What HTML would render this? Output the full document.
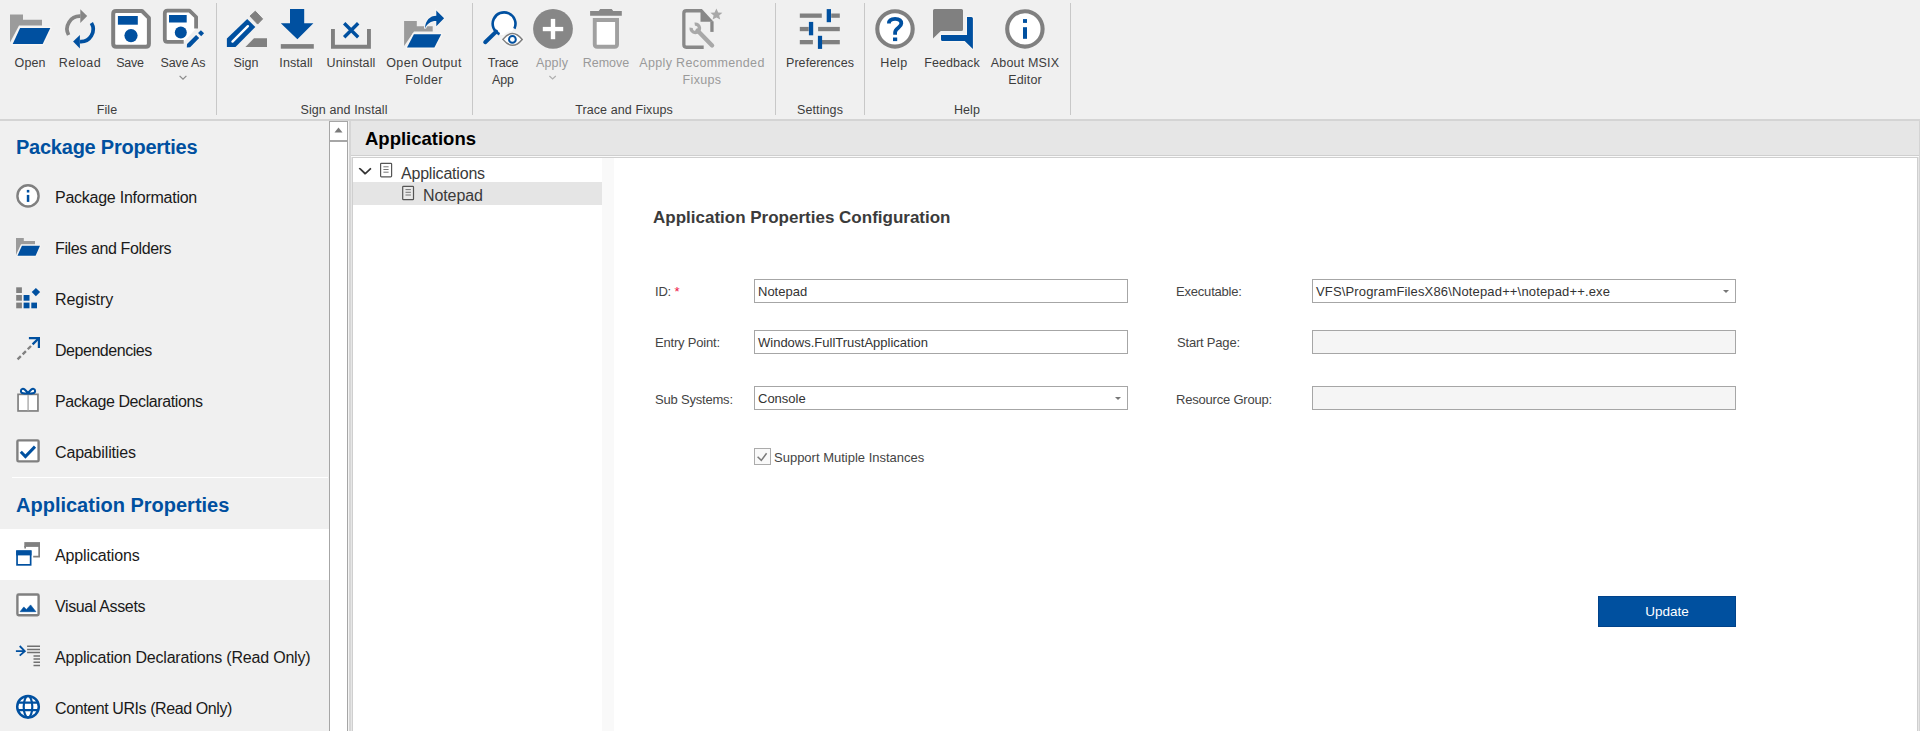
<!DOCTYPE html>
<html><head><meta charset="utf-8">
<style>
*{margin:0;padding:0;box-sizing:border-box}
html,body{width:1920px;height:731px;overflow:hidden;background:#f0f0f0;font-family:"Liberation Sans",sans-serif;color:#000}
.a{position:absolute}
#ribbon{position:absolute;left:0;top:0;width:1920px;height:119px;background:#f0f0f0}
#ribbon .ln{position:absolute;top:119px;left:0;width:1920px;height:2px;background:#d4d4d4}
.sep{position:absolute;top:3px;width:1px;height:112px;background:#c8c8c8}
.lbl{position:absolute;font-size:12.5px;letter-spacing:0.35px;color:#3c3c3c;text-align:center;white-space:nowrap;line-height:17px;transform:translateX(-50%);margin-top:1px}
.dis{color:#9a9a9a}
.glbl{position:absolute;top:102px;font-size:12.5px;letter-spacing:0.1px;color:#3c3c3c;white-space:nowrap;line-height:17px;transform:translateX(-50%)}
.ico{position:absolute}
#nav{position:absolute;left:0;top:121px;width:329px;height:610px;background:#f0f0f0}
.nh{position:absolute;left:16px;font-size:20px;font-weight:bold;letter-spacing:-0.24px;color:#0050a0;white-space:nowrap;margin-top:1px}
.ni{position:absolute;left:55px;font-size:16px;letter-spacing:-0.25px;color:#1a1a1a;white-space:nowrap;margin-top:1px}
#main{position:absolute;left:350px;top:121px;width:1570px;height:610px;background:#e6e6e6}
.fl{position:absolute;font-size:13px;letter-spacing:-0.2px;color:#444;white-space:nowrap}
.tb{position:absolute;height:24px;border:1px solid #a6a6a6;background:#fff;font-size:13px;color:#333;padding-left:3px;line-height:24px;white-space:nowrap}
</style></head><body>
<div id="ribbon">
<svg class="a" style="left:0;top:0" width="1100" height="90">
<!-- Open -->
<path d="M10 14.5H23V19.8H42V25.5H19L10 42.5Z" fill="#9b9b9b"/>
<path d="M20.1 27.9H50.3L42.7 43.9H12.7Z" fill="#0050a0" stroke="#f8f6f4" stroke-width="3" stroke-linejoin="round" paint-order="stroke"/>
<!-- Reload -->
<path d="M68.6 35A12.8 12.8 0 0 1 80.5 16.2" fill="none" stroke="#858585" stroke-width="3.7"/>
<path d="M80.3 9.3L87.2 16.1L80.3 22.9Z" fill="#858585"/>
<path d="M91.4 23A12.3 12.3 0 0 1 80 41.6" fill="none" stroke="#0050a0" stroke-width="3.7"/>
<path d="M79.9 34.9L73.1 41.6L79.9 48.4Z" fill="#0050a0"/>
<!-- Save -->
<path d="M116 11H142L148.9 17.9V43.7Q148.9 46.7 145.9 46.7H116.2Q113.2 46.7 113.2 43.7V14Q113.2 11 116 11Z" fill="#fff" stroke="#808080" stroke-width="4" stroke-linejoin="round"/>
<rect x="117.9" y="16" width="19.9" height="8.7" fill="#0050a0"/>
<circle cx="131" cy="35.6" r="6.6" fill="#0050a0"/>
<!-- Save As -->
<path d="M183.7 41.9H167.5Q164.8 41.9 164.8 39.2V13.5Q164.8 10.7 167.5 10.7H189.5L196.1 17V28.5" fill="#fff" stroke="#808080" stroke-width="3.8" stroke-linejoin="round"/>
<rect x="169" y="15" width="17.7" height="7.5" fill="#0050a0"/>
<circle cx="180.8" cy="32.4" r="6" fill="#0050a0"/>
<path d="M186.8 47.4L187.04 44.04L196.1 35L199.2 38.1L190.16 47.16Z" fill="#0050a0" stroke="#f4f4f4" stroke-width="2.2" stroke-linejoin="round" paint-order="stroke"/>
<path d="M199.6 34.6L202.5 31.7" stroke="#0050a0" stroke-width="4.4"/>
<path d="M179.6 75.8L183 79.2L186.4 75.8" fill="none" stroke="#8a8a8a" stroke-width="1.2"/>
<!-- Sign -->
<path d="M226.9 46.9V38.6L247.2 18.9L255.3 26.9L235.5 46.9Z" fill="#0050a0"/>
<path d="M232.5 41.6L247.9 26.2" stroke="#fff" stroke-width="2.4" stroke-linecap="round"/>
<path d="M255.3 11.2L262.6 18.9L257.6 24.1L250 16.1Z" fill="#808080" stroke="#808080" stroke-width="1" stroke-linejoin="round"/>
<path d="M245.4 46.9L254 38.3H267V46.9Z" fill="#808080"/>
<!-- Install -->
<path d="M290 9H304.2V23.2H313.4L297.4 39.2L280.8 23.2H290Z" fill="#0050a0"/>
<rect x="280.8" y="44.1" width="33" height="4.6" fill="#808080"/>
<!-- Uninstall -->
<path d="M332.95 29.1V46.8H368.95V29.1" fill="none" stroke="#808080" stroke-width="3.9"/>
<path d="M344.2 23.2L358.2 37.2M358.2 23.2L344.2 37.2" stroke="#0050a0" stroke-width="3.4"/>
<!-- Open Output Folder -->
<path d="M404.1 21H416.8V26.2H432.7V31.4H414L404.1 46Z" fill="#9b9b9b"/>
<path d="M413.9 34.3H441.2L434.4 47.6H407Z" fill="#0050a0" stroke="#f8f6f4" stroke-width="3" stroke-linejoin="round" paint-order="stroke"/>
<path d="M425 28.5C425.3 20.5 430 15.8 436.3 15.8V10.5L444.1 18.3L436.3 26.2V21C431.5 20.8 427 23.5 425 28.5Z" fill="#0050a0" stroke="#f4f4f4" stroke-width="2" paint-order="stroke"/>
<!-- Trace App -->
<circle cx="503.6" cy="23.6" r="11.4" fill="#fff"/>
<path d="M514.4 28.6A11.4 11.4 0 1 0 499.5 34.2" fill="none" stroke="#0050a0" stroke-width="2.6"/>
<path d="M485.2 42.2L496.2 31.6" stroke="#0050a0" stroke-width="4" stroke-linecap="round"/>
<path d="M502.2 39.4Q512.5 27 522.9 39.4Q512.5 51.8 502.2 39.4Z" fill="#fff" stroke="#f4f4f4" stroke-width="4.5"/>
<path d="M502.9 39.4Q512.5 27.6 522.2 39.4Q512.5 51.2 502.9 39.4Z" fill="#fff" stroke="#808080" stroke-width="1.5"/>
<circle cx="512.4" cy="39.4" r="3.4" fill="none" stroke="#0050a0" stroke-width="2"/>
<!-- Apply disabled -->
<circle cx="553" cy="28.8" r="19.9" fill="#878787"/>
<rect x="542.8" y="26.9" width="20.4" height="4.3" fill="#fff"/>
<rect x="550.8" y="18.9" width="4.4" height="20.3" fill="#fff"/>
<path d="M549.4 76L552.6 79L555.8 76" fill="none" stroke="#b0b0b0" stroke-width="1.2"/>
<!-- Remove disabled -->
<path d="M590.1 11.1H598.7L600.2 8.9H611.7L613.2 11.1H621.8V15.7H590.1Z" fill="#878787"/>
<path d="M594.75 20.05H617.05V44.3Q617.05 46.8 614.55 46.8H597.25Q594.75 46.8 594.75 44.3Z" fill="#fff" stroke="#a0a0a0" stroke-width="3.9"/>
<!-- Apply Recommended Fixups -->
<path d="M703.7 47.25H686.3Q683.85 47.25 683.85 44.8V13.2Q683.85 10.75 686.3 10.75H701.9" fill="none" stroke="#888" stroke-width="3.3"/>
<path d="M701.9 9.1L713.6 21.7H700.5V9.1Z" fill="#888"/>
<rect x="710.3" y="21.5" width="3.3" height="10.4" fill="#888"/>
<path d="M697.5 30.5L712.1 45.4" stroke="#a8a8a8" stroke-width="4.3" stroke-linecap="round"/>
<path d="M694.7 24.14A4.2 4.2 0 1 1 691.14 27.7" fill="none" stroke="#a8a8a8" stroke-width="3.4"/>
<path d="M716.4 8.5L718.2 12.4L722.4 12.7L719.2 15.5L720.2 19.6L716.4 17.4L712.6 19.6L713.6 15.5L710.4 12.7L714.6 12.4Z" fill="#a8a8a8"/>
<!-- Preferences -->
<g fill="#808080">
<rect x="799.8" y="13.5" width="22" height="4.3"/><rect x="831.2" y="13.5" width="8.6" height="4.3"/>
<rect x="799.8" y="26.9" width="8.9" height="4.3"/><rect x="818.1" y="26.9" width="21.7" height="4.3"/>
<rect x="799.8" y="40" width="13.1" height="4.3"/><rect x="821.8" y="40" width="18" height="4.3"/>
</g>
<g fill="#0050a0">
<rect x="826.7" y="9.1" width="4.3" height="13.1"/>
<rect x="808.9" y="21.9" width="4.3" height="13.4"/>
<rect x="817.9" y="35.8" width="4.2" height="13.1"/>
</g>
<!-- Help -->
<circle cx="895" cy="28.9" r="17.7" fill="#fff" stroke="#808080" stroke-width="4.1"/>
<path d="M888.9 23.6C888.9 19.8 891.5 18.9 895.1 18.9C898.8 18.9 901.3 20.5 901.3 23.6C901.3 27.5 895.1 28 895.1 32.5V34.8" fill="none" stroke="#0050a0" stroke-width="3.8"/>
<rect x="893" y="37.5" width="4.2" height="3.6" fill="#0050a0"/>
<!-- Feedback -->
<path d="M934.5 9.1H961.5Q963 9.1 963 10.6V29.4Q963 30.9 961.5 30.9H940.8L933 38.6V10.6Q933 9.1 934.5 9.1Z" fill="#808080"/>
<path d="M967 16.9H971.4Q972.9 16.9 972.9 18.4V48.9L964.7 41H942.5Q941 41 941 39.5V35H967Z" fill="#0050a0" stroke="#f8f6f4" stroke-width="2.4" stroke-linejoin="round" paint-order="stroke"/>
<!-- About -->
<circle cx="1024.9" cy="28.9" r="17.7" fill="#fff" stroke="#808080" stroke-width="4.1"/>
<rect x="1023" y="19.1" width="4" height="3.8" fill="#0050a0"/>
<rect x="1023" y="27.2" width="4" height="11.6" fill="#0050a0"/>
</svg>
  <div class="ln"></div>
  <div class="sep" style="left:216px"></div>
  <div class="sep" style="left:472px"></div>
  <div class="sep" style="left:775px"></div>
  <div class="sep" style="left:864px"></div>
  <div class="sep" style="left:1070px"></div>

  <div class="lbl" style="left:30px;top:54px;letter-spacing:0.05px">Open</div>
  <div class="lbl" style="left:80px;top:54px;letter-spacing:0.45px">Reload</div>
  <div class="lbl" style="left:130px;top:54px;letter-spacing:-0.25px">Save</div>
  <div class="lbl" style="left:183px;top:54px;letter-spacing:-0.15px">Save As</div>
  <div class="lbl" style="left:246px;top:54px;letter-spacing:0.05px">Sign</div>
  <div class="lbl" style="left:296px;top:54px;letter-spacing:0.10px">Install</div>
  <div class="lbl" style="left:351px;top:54px;letter-spacing:0.10px">Uninstall</div>
  <div class="lbl" style="left:424px;top:54px">Open Output<br>Folder</div>
  <div class="lbl" style="left:503px;top:54px;letter-spacing:-0.15px">Trace<br>App</div>
  <div class="lbl dis" style="left:552px;top:54px;letter-spacing:0.18px">Apply</div>
  <div class="lbl dis" style="left:606px;top:54px;letter-spacing:0.01px">Remove</div>
  <div class="lbl dis" style="left:702px;top:54px">Apply Recommended<br>Fixups</div>
  <div class="lbl" style="left:820px;top:54px;letter-spacing:0.05px">Preferences</div>
  <div class="lbl" style="left:894px;top:54px;letter-spacing:0.40px">Help</div>
  <div class="lbl" style="left:952px;top:54px;letter-spacing:0.08px">Feedback</div>
  <div class="lbl" style="left:1025px;top:54px;letter-spacing:0.17px">About MSIX<br>Editor</div>

  <div class="glbl" style="left:107px">File</div>
  <div class="glbl" style="left:344px">Sign and Install</div>
  <div class="glbl" style="left:624px">Trace and Fixups</div>
  <div class="glbl" style="left:820px">Settings</div>
  <div class="glbl" style="left:967px">Help</div>
</div>

<div id="nav">
  <div class="nh" style="top:14px">Package Properties</div>
  <div class="ni" style="top:67px">Package Information</div>
  <div class="ni" style="top:118px;letter-spacing:-0.381px">Files and Folders</div>
  <div class="ni" style="top:169px;letter-spacing:-0.064px">Registry</div>
  <div class="ni" style="top:220px;letter-spacing:-0.459px">Dependencies</div>
  <div class="ni" style="top:271px;letter-spacing:-0.408px">Package Declarations</div>
  <div class="ni" style="top:322px;letter-spacing:-0.159px">Capabilities</div>
  <div class="nh" style="top:372px;letter-spacing:0">Application Properties</div>
  <div class="a" style="left:0;top:408px;width:329px;height:51px;background:#fff"></div>
  <div class="a" style="left:12px;top:356px;width:316px;height:1px;background:#fff"></div>
  <div class="ni" style="top:425px;letter-spacing:-0.132px">Applications</div>
  <div class="ni" style="top:476px;letter-spacing:-0.367px">Visual Assets</div>
  <div class="ni" style="top:527px;letter-spacing:-0.193px">Application Declarations (Read Only)</div>
  <div class="ni" style="top:578px;letter-spacing:-0.407px">Content URIs (Read Only)</div>
</div>

<div id="sb" class="a" style="left:329px;top:121px;width:19px;height:610px;background:#fff;border:1px solid #a6a6a6;border-bottom:none"></div>
<div class="a" style="left:330px;top:140px;width:17px;height:2px;background:#a6a6a6"></div>
<svg class="a" style="left:334px;top:127px" width="9" height="6"><path d="M0.5 5.5 L4.5 0.5 L8.5 5.5Z" fill="#7a7a7a"/></svg>
<div class="a" style="left:348px;top:121px;width:1px;height:610px;background:#f4f4f4"></div>
<div class="a" style="left:349px;top:121px;width:2px;height:610px;background:#d6d6d6"></div>
<div id="main" class="a" style="left:351px;top:121px;width:1569px;height:610px;background:#e6e6e6">
  <div class="a" style="left:14px;top:7px;font-size:18.5px;font-weight:bold;color:#000;white-space:nowrap">Applications</div>
  <div class="a" style="left:0;top:34px;width:1569px;height:1px;background:#cfcfcf"></div>
  <div class="a" style="left:0;top:35px;width:1569px;height:1px;background:#fafafa"></div>
  <div class="a" style="left:1px;top:36px;width:1566px;height:574px;background:#fff;border:1px solid #cfcfcf;border-bottom:none"></div>
  <div class="a" style="left:1568px;top:0;width:1px;height:610px;background:#d4d4d4"></div>
  <div class="a" style="left:251px;top:37px;width:12px;height:573px;background:#f9f9f9"></div>
  <div class="a" style="left:2px;top:61px;width:249px;height:23px;background:#e5e5e5"></div>
  <svg class="a" style="left:8px;top:46px" width="13" height="8"><path d="M1 1.5 L6.5 6.5 L12 1.5" fill="none" stroke="#444" stroke-width="1.4"/></svg>
  <div class="a" style="left:50px;top:44px;font-size:16px;letter-spacing:-0.2px;color:#3a3a3a;white-space:nowrap">Applications</div>
  <div class="a" style="left:72px;top:66px;font-size:16px;letter-spacing:-0.1px;color:#3a3a3a;white-space:nowrap">Notepad</div>
</div>
<div id="form" class="a" style="left:0;top:0;width:1920px;height:731px;pointer-events:none">
  <div class="a" style="left:653px;top:208px;font-size:17px;letter-spacing:0px;font-weight:bold;color:#3b3b3b;white-space:nowrap">Application Properties Configuration</div>
  <div class="fl" style="left:655px;top:284px">ID: <span style="color:#ee1144">*</span></div>
  <div class="fl" style="left:655px;top:335px">Entry Point:</div>
  <div class="fl" style="left:655px;top:392px">Sub Systems:</div>
  <div class="tb" style="left:754px;top:279px;width:374px">Notepad</div>
  <div class="tb" style="left:754px;top:330px;width:374px">Windows.FullTrustApplication</div>
  <div class="tb" style="left:754px;top:386px;width:374px">Console</div>
  <div class="a" style="left:754px;top:448px;width:17px;height:17px;border:1px solid #ababab;background:#f9f9f9"></div>
  <div class="fl" style="left:774px;top:450px;letter-spacing:0">Support Mutiple Instances</div>
  <div class="fl" style="left:1176px;top:284px">Executable:</div>
  <div class="fl" style="left:1177px;top:335px">Start Page:</div>
  <div class="fl" style="left:1176px;top:392px">Resource Group:</div>
  <div class="tb" style="left:1312px;top:279px;width:424px;letter-spacing:0.15px">VFS\ProgramFilesX86\Notepad++\notepad++.exe</div>
  <div class="tb" style="left:1312px;top:330px;width:424px;background:#f5f5f5"></div>
  <div class="tb" style="left:1312px;top:386px;width:424px;background:#f5f5f5"></div>
  <div class="a" style="left:1598px;top:596px;width:138px;height:31px;background:#00509f;border:1px solid #00428a;color:#fff;font-size:13.5px;text-align:center;line-height:30px">Update</div>
</div>

<svg class="a" style="left:0;top:0" width="60" height="731">
<!-- info -->
<circle cx="28" cy="195.9" r="10.6" fill="#fff" stroke="#808080" stroke-width="2.4"/>
<rect x="26.8" y="189.9" width="2.5" height="2.6" fill="#0050a0"/>
<rect x="26.8" y="194.9" width="2.5" height="7" fill="#0050a0"/>
<!-- folder -->
<path d="M16 238H23.8V241.1H35V244.2H21L16 254.9Z" fill="#9b9b9b"/>
<path d="M21.9 245.7H40L35.6 255.8H17.5Z" fill="#0050a0" stroke="#f8f6f4" stroke-width="1.8" stroke-linejoin="round" paint-order="stroke"/>
<!-- registry -->
<g fill="#808080"><rect x="16.2" y="287.3" width="5.7" height="5.7"/><rect x="16.2" y="295" width="5.7" height="5.7"/><rect x="16.2" y="302.6" width="5.7" height="5.7"/></g>
<g fill="#0050a0"><rect x="23.6" y="295" width="5.9" height="5.7"/><rect x="23.6" y="302.6" width="5.9" height="5.7"/><rect x="31.3" y="302.6" width="5.7" height="5.7"/>
<path d="M35.9 287.9L40.1 292.1L35.9 296.3L31.7 292.1Z"/></g>
<!-- dependencies -->
<path d="M28.9 338.1H38.9V348.1" fill="none" stroke="#0050a0" stroke-width="2.2"/>
<path d="M38.5 338.5L32.6 344.4" stroke="#0050a0" stroke-width="2.3"/>
<path d="M31 346L16.6 360.4" stroke="#808080" stroke-width="2.3" stroke-dasharray="4.6 2.6"/>
<!-- gift -->
<rect x="18.05" y="394.35" width="19.9" height="16.6" fill="#fff" stroke="#808080" stroke-width="1.7"/>
<path d="M28.1 395V410.5" stroke="#b0b0b0" stroke-width="1.5"/>
<path d="M28 393.3C25 393.6 20.9 393.8 20.9 390.9C20.9 388.6 23.3 388.4 24.8 389.6C26.3 390.8 27.4 392.2 28 393.3C28.6 392.2 29.7 390.8 31.2 389.6C32.7 388.4 35.1 388.6 35.1 390.9C35.1 393.8 31 393.6 28 393.3Z" fill="#fff" stroke="#0050a0" stroke-width="2" stroke-linejoin="round"/>
<!-- capabilities -->
<rect x="17.4" y="440.4" width="21.2" height="21" rx="1.2" fill="#fff" stroke="#808080" stroke-width="2.4"/>
<path d="M20.8 451.8L25.4 456.5L35 446.6" fill="none" stroke="#0050a0" stroke-width="3"/>
<!-- applications -->
<rect x="24.3" y="542.1" width="15.7" height="4.8" fill="#808080"/>
<path d="M25.15 546V548.6M39.15 546V556.6H33.2" fill="none" stroke="#808080" stroke-width="1.7"/>
<rect x="17.05" y="551.25" width="13.6" height="13.6" fill="#fff" stroke="#0050a0" stroke-width="1.7"/>
<rect x="16.2" y="550.4" width="15.3" height="5" fill="#0050a0"/>
<!-- visual assets -->
<rect x="17.4" y="594.5" width="21.2" height="20.8" rx="1.2" fill="#fff" stroke="#808080" stroke-width="2.4"/>
<path d="M20.1 611.7L23.8 606.9L26.4 609.5L30.6 604.9L35.9 611.7Z" fill="#0050a0" stroke="#0050a0" stroke-width="0.6" stroke-linejoin="round"/>
<!-- app declarations -->
<path d="M15.9 651.1H25M19.7 646L24.8 651.1L19.7 655.7" fill="none" stroke="#0050a0" stroke-width="1.8"/>
<g stroke="#707070" stroke-width="1.5"><path d="M27.1 646.3H40M27.1 649.4H40M27.1 652.6H40M33.5 655.9H40M33.5 659H40M33.5 662.2H40M33.5 665.5H40"/></g>
<!-- globe -->
<circle cx="28" cy="706.8" r="10.8" fill="#fff" stroke="#0050a0" stroke-width="2.5"/>
<ellipse cx="28" cy="706.8" rx="4.3" ry="10.8" fill="none" stroke="#0050a0" stroke-width="2.2"/>
<path d="M17.5 702.7H38.5M17.5 710.2H38.5" stroke="#0050a0" stroke-width="2.2"/>
</svg>
<svg class="a" style="left:0;top:0" width="1920" height="731">
<path d="M359.1 168.1L364.9 173.9L370.8 168.1" fill="none" stroke="#333" stroke-width="1.3"/>
<rect x="380.6" y="163.3" width="11" height="13.6" rx="0.8" fill="#fff" stroke="#555" stroke-width="1.2"/>
<path d="M383.4 166.8H388.6M383.4 169.5H388.6M383.4 172.2H388.6" stroke="#666" stroke-width="0.9"/>
<rect x="402.7" y="186.3" width="10.8" height="13.4" rx="0.8" fill="#eaeaea" stroke="#555" stroke-width="1.2"/>
<path d="M405.5 189.6H410.9M405.5 192.3H410.9M405.5 195H410.9" stroke="#666" stroke-width="0.9"/>
<path d="M757.6 456.8L761.3 460.4L766.6 453.2" fill="none" stroke="#7a7a7a" stroke-width="1.5"/>
<path d="M1723 290H1729L1726 293Z" fill="#777"/>
<path d="M1115 397H1121L1118 400Z" fill="#777"/>
</svg>
</body></html>
